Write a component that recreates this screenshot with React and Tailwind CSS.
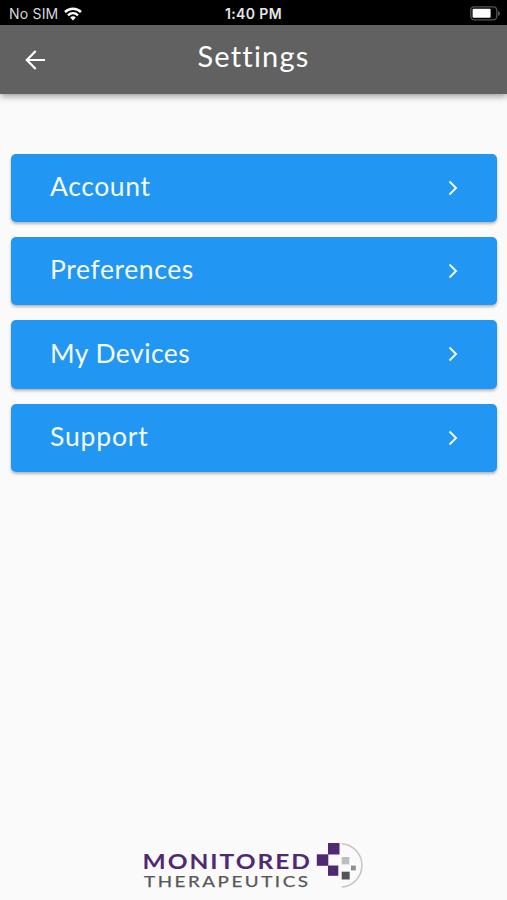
const items = [
  { label: "Account", spacing: "tracking-[0.6px]" },
  { label: "Preferences", spacing: "tracking-[0.6px]" },
  { label: "My Devices", spacing: "tracking-[0.45px]" },
  { label: "Support", spacing: "tracking-[0.85px]" },
];

function StatusBar() {
  return (
    <div className="grid h-[25px] grid-cols-3 items-center bg-black font-['Inter',sans-serif] text-[14px] leading-none text-white">
      <div className="flex items-center gap-[6px] pt-[2px] pl-[9px] text-[#d8d8d8]">
        <span className="tracking-[0.2px]">No SIM</span>
        <svg width="18" height="14" viewBox="0 0 18 14" fill="none" stroke="white" strokeWidth="2.5">
          <path d="M1 5C5.6.6 12.4.6 17 5" />
          <path d="M4 8.3c2.9-2.7 7.1-2.7 10 0" />
          <path d="M6.2 10.4c1.6-1.4 4-1.4 5.6 0L9 13.4z" fill="white" stroke="none" />
        </svg>
      </div>
      <div className="pt-[3px] text-center text-[14px] font-semibold tracking-[0.4px] text-[#e6e6e6]">1:40 PM</div>
      <div className="flex justify-end pt-[1px] pr-[6px]">
        <svg width="31" height="15" viewBox="0 0 31 15" fill="none">
          <rect x="0.8" y="0.8" width="26" height="13" rx="3.5" stroke="#555" strokeWidth="1.3" />
          <rect x="2.6" y="2.8" width="18" height="9" rx="1" fill="white" />
          <path d="M28 5v5c1.6-.8 2-1.500 2-2.500S29.600 5.800 28 5z" fill="#555" />
        </svg>
      </div>
    </div>
  );
}

function Logo() {
  return (
    <svg width="224" height="50" viewBox="142 840 224 50" className="font-['Lato',sans-serif]">
      <text x="142.500" y="868.500" fontSize="21" fontWeight="700" fill="#4f2a73" letterSpacing="1.700" textLength="169.500" lengthAdjust="spacingAndGlyphs">MONITORED</text>
      <text x="144" y="886.900" fontSize="14.800" fill="#58585a" stroke="#58585a" strokeWidth="0.250" letterSpacing="2" textLength="166.500" lengthAdjust="spacingAndGlyphs">THERAPEUTICS</text>
      <g fill="#4f2a73">
        <rect x="328" y="843" width="11.500" height="11.500" />
        <rect x="316.800" y="854.300" width="11.500" height="11.500" />
        <rect x="328" y="865.500" width="10.300" height="10.300" />
      </g>
      <rect x="341.700" y="857" width="7.600" height="7.300" fill="#bdbdbd" />
      <rect x="351" y="865.600" width="4.800" height="4.800" fill="#8e8e8e" />
      <rect x="341.700" y="871.700" width="8" height="7.800" fill="#555557" />
      <path d="M341.700 843.700A21.700 21.700 0 0 1 341.700 887" fill="none" stroke="#c4c4c4" strokeWidth="1.500" />
    </svg>
  );
}

export default function App() {
  return (
    <div className="flex h-[900px] w-full flex-col bg-[#fafafa] font-['Lato',sans-serif] text-white">
      <StatusBar />
      <header className="grid h-[69px] grid-cols-[1fr_auto_1fr] items-center bg-[#616161] shadow-[0_2px_7px_rgba(0,0,0,0.42)]">
        <svg className="ml-[25px]" width="21" height="20" viewBox="0 0 21 20" fill="none" stroke="white" strokeWidth="2.200">
          <path d="M20 10H2M10.700 1L1.800 10l8.900 9" />
        </svg>
        <h1 className="pb-[8px] text-[29px] leading-none tracking-[1.2px]">Settings</h1>
      </header>
      <main className="flex flex-col gap-[15px] pt-[59.500px] pr-[10px] pl-[11px]">
        {items.map(({ label, spacing }) => (
          <button key={label} className="flex h-[68.400px] items-center justify-between rounded-[5px] bg-[#2196f3] pr-[39px] pl-[39px] shadow-[0_2px_3px_rgba(0,0,0,0.28)]">
            <span className={`pb-[3px] text-[26.500px] leading-none text-[#f4faff] ${spacing}`}>{label}</span>
            <svg width="10" height="16" viewBox="0 0 10 16" fill="none" stroke="#eef8ff" strokeWidth="2">
              <path d="M1.500 1.500L8 8l-6.500 6.500" />
            </svg>
          </button>
        ))}
      </main>
      <footer className="mt-auto flex justify-center pb-[10px]">
        <Logo />
      </footer>
    </div>
  );
}
